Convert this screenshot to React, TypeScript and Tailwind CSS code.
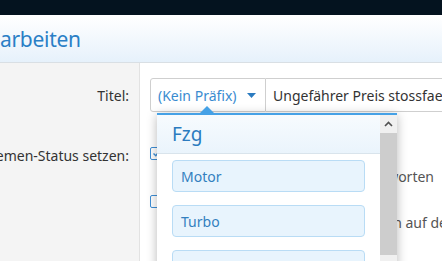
import React from "react";

export default function App() {
  const font = { fontFamily: '"Noto Sans", "Open Sans", sans-serif' };
  return (
    <div
      className="relative w-[442px] h-[261px] overflow-hidden bg-white"
      style={font}
    >
      {/* top dark bar */}
      <div className="h-[15px] bg-[#04131f]" />
      {/* header */}
      <div className="h-[48px] border-t border-white border-b border-b-[#d9dfe4] bg-gradient-to-b from-white to-[#e6f1fb] flex items-center">
        <span className="text-[21px] leading-none tracking-[-0.3px] text-[#2a7fc6] pt-[1px] whitespace-nowrap">
          arbeiten
        </span>
      </div>
      {/* body */}
      <div className="flex h-[200px]">
        <div className="w-[140px] shrink-0 bg-[#f4f4f4] border-r border-[#e2e2e2] flex flex-col overflow-hidden pr-[10px]">
          <div className="h-[34px] mt-[15px] flex justify-end items-center text-[14px] text-[#333] whitespace-nowrap">
            Titel:
          </div>
          <div className="h-[20px] mt-[33px] flex justify-end items-center text-[14px] text-[#333] whitespace-nowrap">
            Themen-Status setzen:
          </div>
        </div>
        <div className="flex-1 flex flex-col pl-[10px] min-w-0">
          {/* title row */}
          <div className="mt-[15px] h-[34px] shrink-0 flex">
            <div className="w-[116px] shrink-0 h-full border border-[#cfcfcf] rounded-l-[3px] bg-white flex items-center pl-[7px] text-[14px] text-[#3a8bd0] whitespace-nowrap">
              <span>(Kein Präfix)</span>
              <svg width="9" height="5" viewBox="0 0 9 5" className="ml-[10px]">
                <path d="M0 0 L9 0 L4.5 5 Z" fill="#2b7bc0" />
              </svg>
            </div>
            <div className="flex-1 h-full border-y border-[#cfcfcf] flex items-center pl-[7px] text-[14px] text-[#333] whitespace-nowrap overflow-hidden">
              Ungefährer Preis stossfaenger
            </div>
          </div>
          {/* checkbox row 1 */}
          <div className="mt-[35px] h-[13px] shrink-0 flex items-center">
            <div className="w-[13px] h-[13px] shrink-0 border border-[#3f8fd6] rounded-[2px] bg-white flex items-center justify-center">
              <svg width="9" height="9" viewBox="0 0 9 9">
                <path d="M1.5 4.5 L3.8 6.8 L7.5 2" stroke="#3f8fd6" strokeWidth="1.4" fill="none" />
              </svg>
            </div>
            <span className="ml-[6px] text-[14px] text-[#333] whitespace-nowrap">Geschlossen</span>
          </div>
          <div className="mt-[6px] h-[20px] shrink-0 w-[284px] flex justify-end items-center text-[14px] text-[#555] whitespace-nowrap">
            Keine weiteren Antworten
          </div>
          {/* checkbox row 2 */}
          <div className="mt-[9px] h-[13px] shrink-0 flex items-center">
            <div className="w-[13px] h-[13px] shrink-0 border border-[#3f8fd6] rounded-[2px] bg-white" />
            <span className="ml-[6px] text-[14px] text-[#333] whitespace-nowrap">Angeheftet</span>
          </div>
          <div className="mt-[4px] h-[20px] shrink-0 w-[310px] flex justify-end items-center text-[14px] text-[#555] whitespace-nowrap">
            Anheften auf dem
          </div>
        </div>
      </div>

      {/* dropdown overlay */}
      <div className="absolute left-[157px] top-[106px] w-[240px]">
        <div className="relative h-[7px]">
          <svg
            width="16"
            height="8"
            viewBox="0 0 16 8"
            className="absolute left-[42px] top-0"
          >
            <path d="M0 8 L8 0 L16 8 Z" fill="#45a1e6" />
          </svg>
        </div>
        <div className="border-t-2 border-[#45a1e6] bg-white shadow-[0_2px_10px_rgba(0,0,0,0.28)] flex h-[160px] overflow-hidden">
          <div className="w-[223px] shrink-0 flex flex-col">
            <div className="h-[39px] shrink-0 bg-gradient-to-b from-[#f7fbfe] to-[#eaf4fc] border-b border-[#d9e4ec] flex items-center pl-[15px] text-[19px] text-[#2b7bbf]">
              Fzg
            </div>
            <div className="flex flex-col gap-[13px] pt-[6px] pl-[15px] pr-[15px]">
              {["Motor", "Turbo", "Lager"].map((t) => (
                <div
                  key={t}
                  className="h-[32px] shrink-0 rounded-[4px] border border-[#b9dcf5] bg-[#e8f4fd] flex items-center pl-[8px] text-[14px] text-[#3380bf]"
                >
                  {t}
                </div>
              ))}
            </div>
          </div>
          <div className="w-[17px] shrink-0 flex flex-col bg-[#f0f0f0]">
            <div className="h-[18px] shrink-0 flex items-center justify-center">
              <svg width="9" height="6" viewBox="0 0 9 6">
                <path d="M1 5 L4.5 1.5 L8 5" stroke="#505050" strokeWidth="1.6" fill="none" />
              </svg>
            </div>
            <div className="h-[122px] shrink-0 bg-[#cdcdcd]" />
          </div>
        </div>
      </div>
    </div>
  );
}
